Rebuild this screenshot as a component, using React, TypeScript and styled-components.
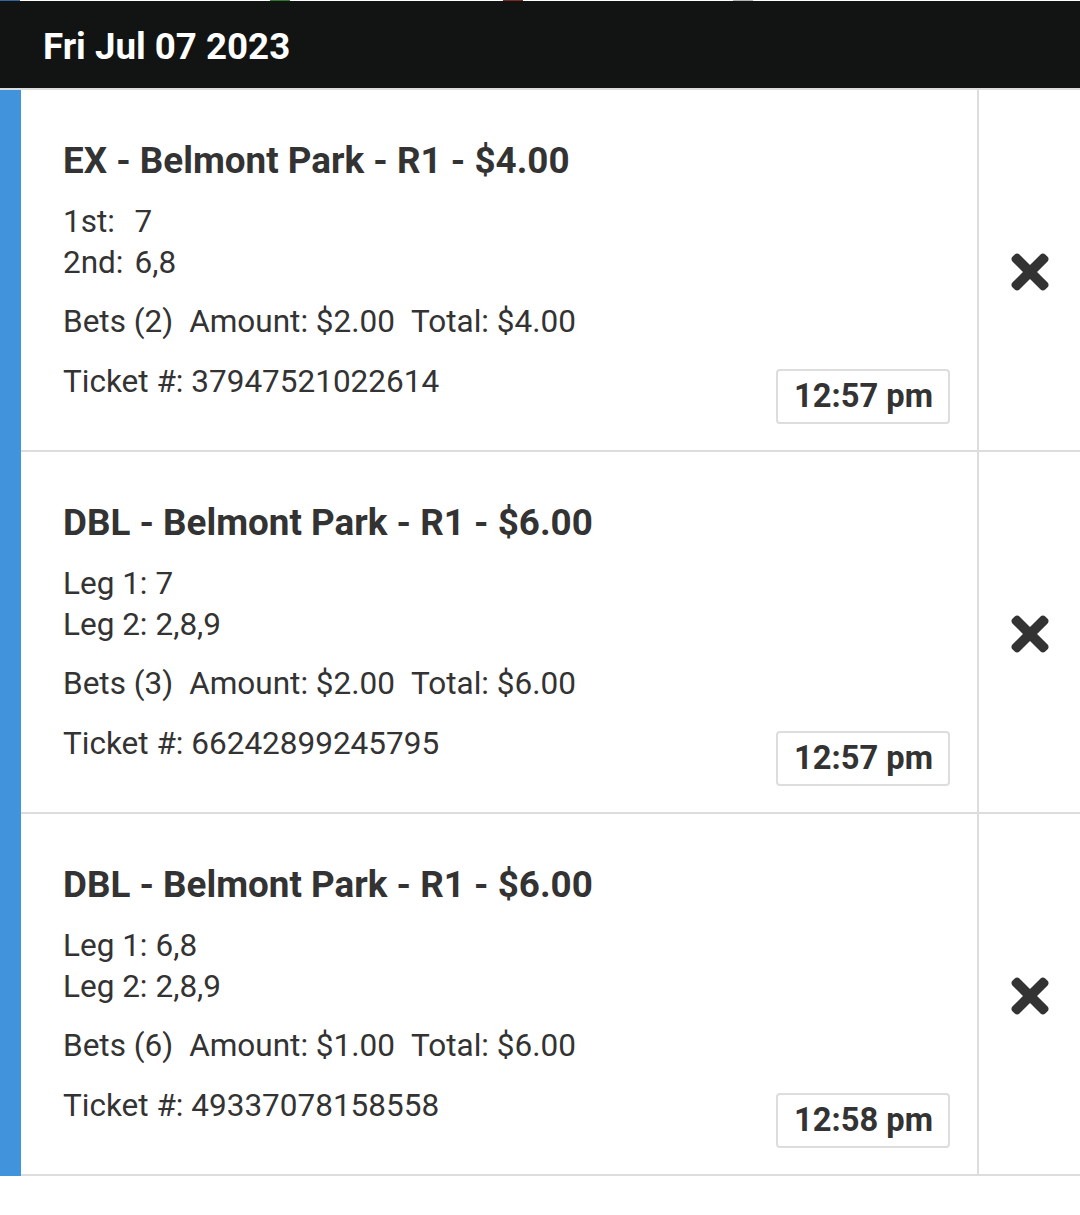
import React from "react";
import styled, { createGlobalStyle } from "styled-components";
import { FaTimes } from "react-icons/fa";

const GlobalStyle = createGlobalStyle`
  html, body {
    margin: 0;
    padding: 0;
    background: #ffffff;
  }
  body {
    font-family: Roboto, "Liberation Sans", Arial, sans-serif;
    color: #333333;
  }
  * { box-sizing: border-box; }
`;

const Page = styled.div`
  width: 1080px;
  display: flex;
  flex-direction: column;
`;

const TopStrip = styled.div`
  height: 1px;
  display: flex;
  background: #ffffff;
`;

const StripMark = styled.span<{ $color: string; $offset: number }>`
  width: 20px;
  height: 1px;
  margin-left: ${(p) => p.$offset}px;
  background: ${(p) => p.$color};
`;

const Header = styled.header`
  height: 89px;
  padding: 4px 0 0 43px;
  display: flex;
  align-items: center;
  background: #121413;
  border-bottom: 2px solid #dddddd;
`;

const DateTitle = styled.h1`
  margin: 0;
  font-size: 36.7px;
  line-height: 44px;
  font-weight: 700;
  color: #ffffff;
`;

const List = styled.div`
  display: flex;
  flex-direction: column;
  border-left: 21px solid #4193dc;
`;

const Row = styled.div`
  height: 362px;
  display: flex;
  border-bottom: 2px solid #dddddd;
`;

const Content = styled.div`
  flex: 1;
  display: flex;
  justify-content: space-between;
  padding: 49px 27px 26px 42px;
`;

const Info = styled.div`
  display: flex;
  flex-direction: column;
`;

const Title = styled.h2`
  margin: 0;
  font-size: 36.8px;
  line-height: 44px;
  font-weight: 700;
  color: #333333;
  white-space: nowrap;
`;

const Legs = styled.div<{ $gap: number }>`
  margin-top: 18px;
  display: grid;
  grid-template-columns: auto 1fr;
  column-gap: ${(p) => p.$gap}px;
  font-size: 31.5px;
  line-height: 41px;
`;

const Summary = styled.div`
  margin-top: 18px;
  display: flex;
  gap: 16px;
  font-size: 31.5px;
  line-height: 41px;
  white-space: nowrap;
`;

const Ticket = styled.div`
  margin-top: 19px;
  font-size: 31.5px;
  line-height: 41px;
  white-space: nowrap;
`;

const TimeBox = styled.div`
  align-self: flex-end;
  height: 55px;
  padding: 0 15px 0 16px;
  border: 2px solid #dddddd;
  border-radius: 4px;
  font-size: 32.7px;
  line-height: 51px;
  font-weight: 700;
  color: #333333;
  white-space: nowrap;
`;

const IconCell = styled.div`
  width: 103px;
  flex-shrink: 0;
  display: flex;
  align-items: center;
  justify-content: center;
  border-left: 2px solid #dddddd;
  color: #333333;
  padding: 3px 0 0 1px;
`;

type Bet = {
  title: string;
  legs: [string, string][];
  legGap: number;
  bets: number;
  amount: string;
  total: string;
  ticket: string;
  time: string;
};

const bets: Bet[] = [
  {
    title: "EX - Belmont Park - R1 - $4.00",
    legs: [
      ["1st:", "7"],
      ["2nd:", "6,8"],
    ],
    legGap: 11,
    bets: 2,
    amount: "$2.00",
    total: "$4.00",
    ticket: "37947521022614",
    time: "12:57 pm",
  },
  {
    title: "DBL - Belmont Park - R1 - $6.00",
    legs: [
      ["Leg 1:", "7"],
      ["Leg 2:", "2,8,9"],
    ],
    legGap: 8,
    bets: 3,
    amount: "$2.00",
    total: "$6.00",
    ticket: "66242899245795",
    time: "12:57 pm",
  },
  {
    title: "DBL - Belmont Park - R1 - $6.00",
    legs: [
      ["Leg 1:", "6,8"],
      ["Leg 2:", "2,8,9"],
    ],
    legGap: 8,
    bets: 6,
    amount: "$1.00",
    total: "$6.00",
    ticket: "49337078158558",
    time: "12:58 pm",
  },
];

export default function App() {
  return (
    <Page>
      <GlobalStyle />
      <TopStrip>
        <StripMark $color="#35669a" $offset={0} />
        <StripMark $color="#2f7a32" $offset={250} />
        <StripMark $color="#7a2a22" $offset={213} />
        <StripMark $color="#b4b4b4" $offset={210} />
      </TopStrip>
      <Header>
        <DateTitle>Fri Jul 07 2023</DateTitle>
      </Header>
      <List>
        {bets.map((b, i) => (
          <Row key={i}>
            <Content>
              <Info>
                <Title>{b.title}</Title>
                <Legs $gap={b.legGap}>
                  {b.legs.map(([label, value]) => (
                    <React.Fragment key={label}>
                      <span>{label}</span>
                      <span>{value}</span>
                    </React.Fragment>
                  ))}
                </Legs>
                <Summary>
                  <span>Bets ({b.bets})</span>
                  <span>Amount: {b.amount}</span>
                  <span>Total: {b.total}</span>
                </Summary>
                <Ticket>Ticket #: {b.ticket}</Ticket>
              </Info>
              <TimeBox>{b.time}</TimeBox>
            </Content>
            <IconCell>
              <FaTimes size={54} />
            </IconCell>
          </Row>
        ))}
      </List>
    </Page>
  );
}
